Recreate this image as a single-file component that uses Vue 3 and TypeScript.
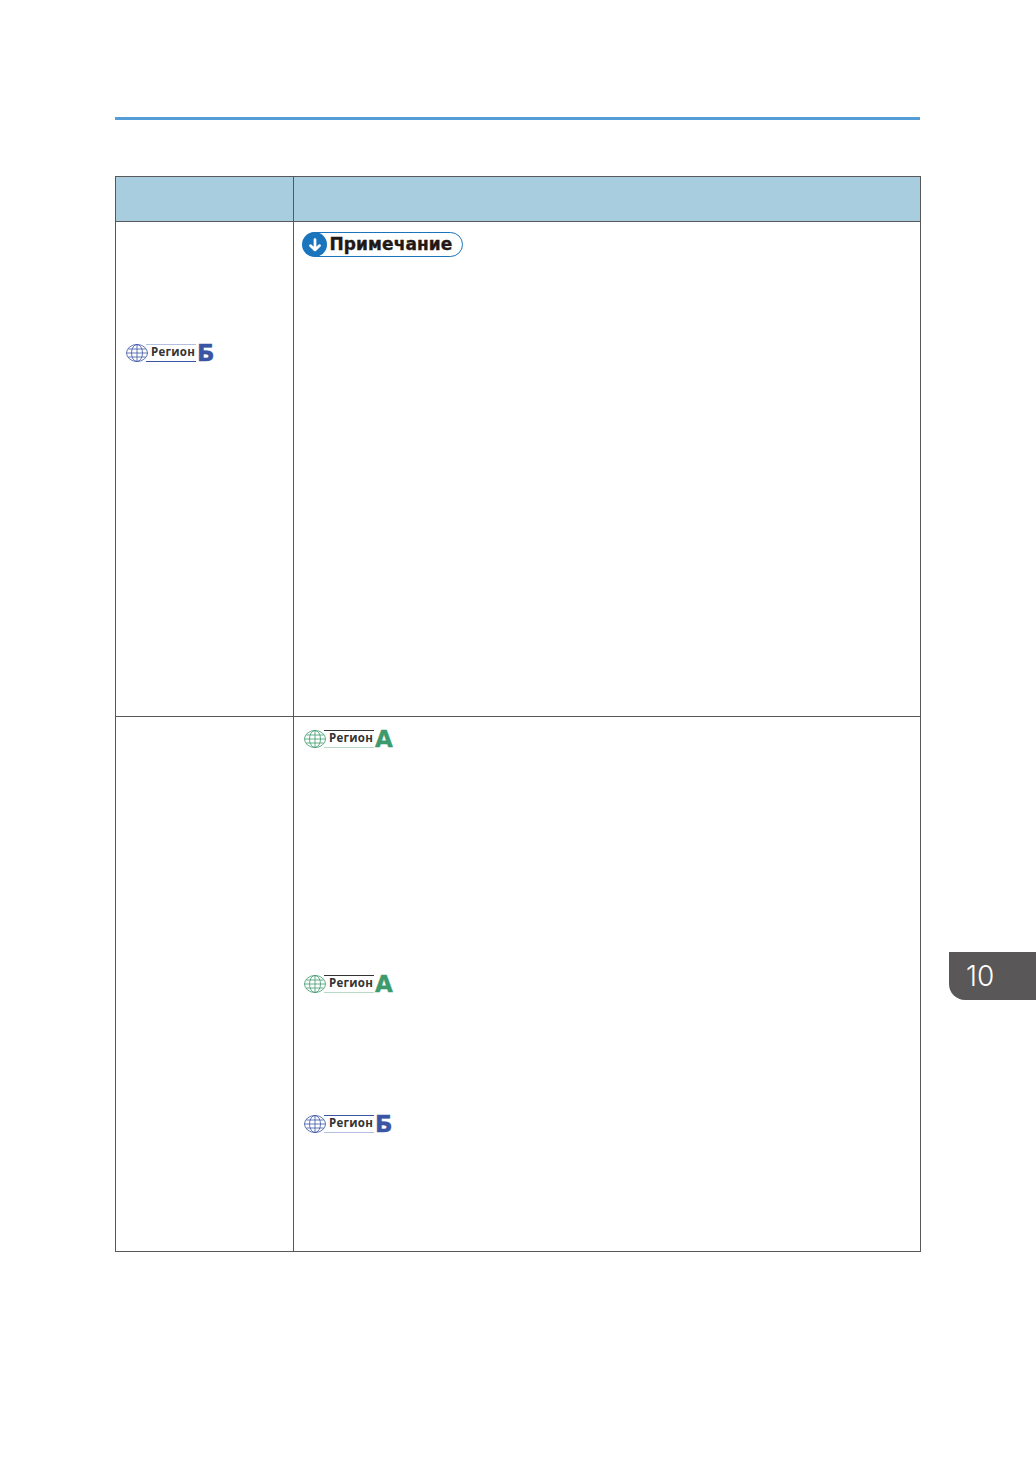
<script setup lang="ts">
interface Badge {
  id: number
  letter: string
  tone: 'blue' | 'green'
  top: number
}
const rightBadges: Badge[] = [
  { id: 1, letter: 'А', tone: 'green', top: 13 },
  { id: 2, letter: 'А', tone: 'green', top: 227 },
  { id: 3, letter: 'Б', tone: 'blue', top: 122 },
]
</script>

<template>
  <div class="page">
    <div class="rule"></div>
    <div class="table">
      <div class="head first"></div>
      <div class="head"></div>

      <div class="cell first left-cell">
        <div class="badge blue swapped">
          <svg class="globe" viewBox="0 0 22 18" fill="none" stroke="currentColor" stroke-width="0.8">
            <ellipse cx="11" cy="9" rx="10.5" ry="8.5" />
            <ellipse cx="11" cy="9" rx="5.5" ry="8.5" />
            <path d="M11 .5V17.5M2.2 5H19.8M2.2 13H19.8M.5 9H21.5" />
          </svg>
          <span class="label">Регион</span>
          <span class="letter">Б</span>
        </div>
      </div>
      <div class="cell right-note">
        <div class="note">
          <span class="note-icon">
            <svg viewBox="0 0 16 16" width="16" height="16" fill="none" stroke="#fff" stroke-width="2.7" stroke-linecap="round" stroke-linejoin="round">
              <path d="M8 2.5V13M3.4 8.6 8 13l4.6-4.4" />
            </svg>
          </span>
          <span class="note-text">Примечание</span>
        </div>
      </div>

      <div class="cell first"></div>
      <div class="cell right-badges">
        <div
          v-for="b in rightBadges"
          :key="b.id"
          class="badge"
          :class="b.tone"
          :style="{ marginTop: b.top + 'px' }"
        >
          <svg class="globe" viewBox="0 0 22 18" fill="none" stroke="currentColor" stroke-width="0.8">
            <ellipse cx="11" cy="9" rx="10.5" ry="8.5" />
            <ellipse cx="11" cy="9" rx="5.5" ry="8.5" />
            <path d="M11 .5V17.5M2.2 5H19.8M2.2 13H19.8M.5 9H21.5" />
          </svg>
          <span class="label">Регион</span>
          <span class="letter">{{ b.letter }}</span>
        </div>
      </div>
    </div>
    <div class="tab">10</div>
  </div>
</template>

<style>
html,
body {
  margin: 0;
  background: #fff;
}
</style>

<style scoped>
.page {
  position: relative;
  box-sizing: border-box;
  width: 1036px;
  height: 1470px;
  padding: 117px 115px 0;
  background: #fff;
  font-family: "DejaVu Sans", sans-serif;
  overflow: hidden;
}
.rule {
  width: 805px;
  height: 3px;
  background: #559dd6;
}
.table {
  display: grid;
  grid-template-columns: 179px 627px;
  grid-template-rows: 45px 495px 535px;
  box-sizing: border-box;
  width: 806px;
  margin-top: 56px;
  border-top: 1px solid #595757;
}
.head,
.cell {
  box-sizing: border-box;
  border-right: 1px solid #595757;
  border-bottom: 1px solid #595757;
}
.first {
  border-left: 1px solid #595757;
}
.head {
  background: #a7cddf;
}
.left-cell {
  padding: 122px 0 0 10px;
}
.right-note {
  padding: 10px 0 0 9px;
}
.right-badges {
  display: flex;
  flex-direction: column;
  align-items: flex-start;
  padding-left: 10px;
}
.badge {
  display: flex;
  align-items: center;
  height: 18px;
}
.badge.blue {
  color: #3b55a5;
}
.badge.green {
  color: #3d9a6d;
}
.globe {
  flex: none;
  width: 22px;
  height: 18px;
}
.label {
  box-sizing: border-box;
  width: 50px;
  height: 18px;
  margin-left: -2px;
  padding-left: 5px;
  border-top: 1px solid currentColor;
  border-bottom: 1px solid #b9d9c8;
  color: #333;
  font-family: "Open Sans", sans-serif;
  font-size: 11.5px;
  font-weight: 700;
  line-height: 14px;
  letter-spacing: 0.25px;
  white-space: nowrap;
}
.badge.blue .label {
  border-top-color: #3b55a5;
  border-bottom-color: #b4bfdf;
}
.badge.swapped .label {
  border-top-color: #b4bfdf;
  border-bottom-color: #3b55a5;
}
.letter {
  margin-left: 1px;
  font-size: 23px;
  font-weight: 700;
  line-height: 18px;
  -webkit-text-stroke: 0.4px currentColor;
}
.note {
  display: inline-flex;
  align-items: center;
  box-sizing: border-box;
  width: 160px;
  height: 25px;
  border: 1.6px solid #1b75bc;
  border-radius: 13px;
}
.note-icon {
  display: flex;
  flex: none;
  align-items: center;
  justify-content: center;
  width: 25px;
  height: 25px;
  margin-left: -1.6px;
  border-radius: 50%;
  background: #1b75bc;
}
.note-text {
  margin-left: 2px;
  padding-bottom: 2px;
  color: #231815;
  font-size: 17px;
  font-weight: 700;
  line-height: 22px;
  letter-spacing: 0.1px;
  white-space: nowrap;
  -webkit-text-stroke: 0.35px #231815;
}
.tab {
  position: absolute;
  top: 952px;
  left: 949px;
  box-sizing: border-box;
  width: 87px;
  height: 48px;
  padding: 6px 0 0 17px;
  border-bottom-left-radius: 16px;
  background: #595757;
  color: #fff;
  font-family: Inter, sans-serif;
  font-size: 28px;
  font-weight: 300;
  line-height: 36px;
}
</style>
